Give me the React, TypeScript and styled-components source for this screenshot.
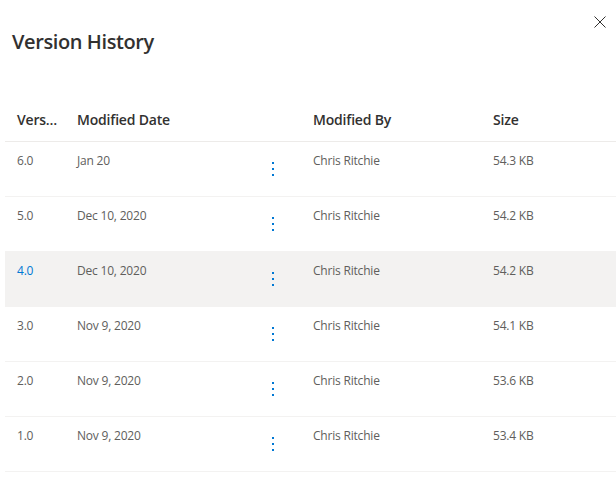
import React from "react";
import styled, { createGlobalStyle } from "styled-components";

const GlobalStyle = createGlobalStyle`
  html, body {
    margin: 0;
    padding: 0;
    background: #ffffff;
  }

  body {
    font-family: "Segoe UI", "Open Sans", sans-serif;
    -webkit-font-smoothing: antialiased;
  }
`;

const colorText = "#323130";
const colorSubText = "#605e5c";
const colorBlue = "#0078d4";
const columns = "60px 180px 56px 180px 1fr";

const Panel = styled.div`
  width: 616px;
  height: 502px;
  display: flex;
  flex-direction: column;
  overflow: hidden;
`;

const TopBar = styled.div`
  display: flex;
  justify-content: space-between;
  align-items: flex-start;
`;

const Title = styled.h2`
  margin: 0;
  padding: 28px 0 0 12px;
  font-size: 20px;
  font-weight: 600;
  line-height: 28px;
  letter-spacing: -0.4px;
  color: ${colorText};
`;

const CloseButton = styled.button`
  margin-top: 6px;
  width: 32px;
  height: 32px;
  padding: 0;
  border: none;
  background: transparent;
  display: flex;
  align-items: center;
  justify-content: center;
  color: ${colorText};
  cursor: pointer;
`;

const Table = styled.div`
  margin: 43px 0 0 5px;
  display: flex;
  flex-direction: column;
`;

const HeaderRow = styled.div`
  display: grid;
  grid-template-columns: ${columns};
  height: 43px;
  padding-bottom: 2px;
  box-sizing: border-box;
  align-items: center;
  border-bottom: 1px solid #edebe9;
`;

const HeaderCell = styled.div<{ $tight?: boolean }>`
  padding: 0 ${(p) => (p.$tight ? "5px" : "8px")} 0 12px;
  font-size: 14px;
  font-weight: 600;
  letter-spacing: -0.2px;
  color: ${colorText};
  white-space: nowrap;
  overflow: hidden;
  text-overflow: ellipsis;
`;

const Row = styled.div<{ $selected?: boolean }>`
  display: grid;
  grid-template-columns: ${columns};
  min-height: 54px;
  border-bottom: 1px solid #f3f2f1;
  background: ${(p) => (p.$selected ? "#f3f2f1" : "transparent")};
`;

const Cell = styled.div<{ $accent?: boolean }>`
  padding: 11px 8px 11px 12px;
  font-size: 12px;
  line-height: 16px;
  letter-spacing: -0.2px;
  color: ${(p) => (p.$accent ? colorBlue : colorSubText)};
  white-space: nowrap;
  overflow: hidden;
  text-overflow: ellipsis;
`;

const MoreCell = styled.div`
  display: flex;
  align-items: center;
  justify-content: center;
  color: ${colorBlue};
`;

interface Version {
  version: string;
  date: string;
  author: string;
  size: string;
}

const versions: Version[] = [
  { version: "6.0", date: "Jan 20", author: "Chris Ritchie", size: "54.3 KB" },
  { version: "5.0", date: "Dec 10, 2020", author: "Chris Ritchie", size: "54.2 KB" },
  { version: "4.0", date: "Dec 10, 2020", author: "Chris Ritchie", size: "54.2 KB" },
  { version: "3.0", date: "Nov 9, 2020", author: "Chris Ritchie", size: "54.1 KB" },
  { version: "2.0", date: "Nov 9, 2020", author: "Chris Ritchie", size: "53.6 KB" },
  { version: "1.0", date: "Nov 9, 2020", author: "Chris Ritchie", size: "53.4 KB" },
];

const MoreIcon = () => (
  <svg width="2" height="14" viewBox="0 0 2 14" fill="currentColor">
    <rect x="0" y="0" width="2" height="2" />
    <rect x="0" y="6" width="2" height="2" />
    <rect x="0" y="12" width="2" height="2" />
  </svg>
);

const CloseIcon = () => (
  <svg width="12" height="12" viewBox="0 0 12 12" fill="none" stroke="currentColor" strokeWidth="1">
    <path d="M0.5 0.5 L11.5 11.5 M11.5 0.5 L0.5 11.5" />
  </svg>
);

const App: React.FC = () => {
  const selected = "4.0";

  return (
    <>
      <GlobalStyle />
      <Panel>
        <TopBar>
          <Title>Version History</Title>
          <CloseButton aria-label="Close">
            <CloseIcon />
          </CloseButton>
        </TopBar>

        <Table>
          <HeaderRow>
            <HeaderCell $tight>Version</HeaderCell>
            <HeaderCell>Modified Date</HeaderCell>
            <HeaderCell />
            <HeaderCell>Modified By</HeaderCell>
            <HeaderCell>Size</HeaderCell>
          </HeaderRow>
          {versions.map((v) => (
            <Row key={v.version} $selected={v.version === selected}>
              <Cell $accent={v.version === selected}>{v.version}</Cell>
              <Cell>{v.date}</Cell>
              <MoreCell>
                <MoreIcon />
              </MoreCell>
              <Cell>{v.author}</Cell>
              <Cell>{v.size}</Cell>
            </Row>
          ))}
        </Table>
      </Panel>
    </>
  );
};

export default App;
